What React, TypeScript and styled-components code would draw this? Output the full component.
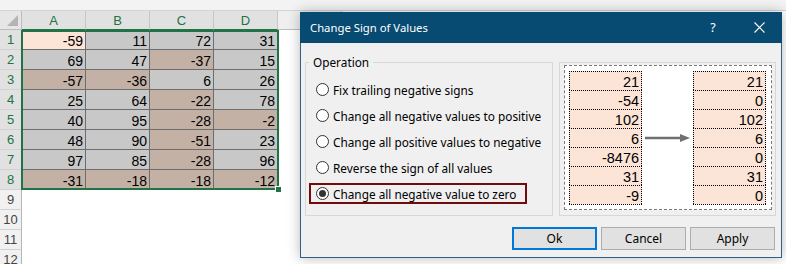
import React from "react";
import styled, { createGlobalStyle } from "styled-components";

const GlobalStyle = createGlobalStyle`
  html, body { margin: 0; padding: 0; background: #fff; overflow: hidden; }
  *, *::before, *::after { box-sizing: border-box; }
`;

const Page = styled.div`
  position: relative;
  width: 786px;
  height: 264px;
  overflow: hidden;
  background: #fff;
  display: flex;
  flex-direction: column;
`;

const Ribbon = styled.div`
  flex: none;
  height: 11px;
  background: #f3f3f3;
  border-bottom: 1px solid #d4d4d4;
`;

const SheetWrap = styled.div`
  position: relative;
  flex: none;
`;

const Grid = styled.div`
  display: grid;
  grid-template-columns: 22px repeat(5, 64px);
  grid-template-rows: 19px repeat(12, 20px);
  font-family: "Liberation Sans", Arial, sans-serif;
`;

const Corner = styled.div`
  position: relative;
  background: #e6e6e6;
  border-right: 1px solid #bdbdbd;
  border-bottom: 1px solid #bdbdbd;
  display: flex;
  align-items: flex-end;
  justify-content: flex-end;
  padding: 0 3px 3px 0;
`;

const ColHead = styled.div<{ $sel?: boolean }>`
  background: ${(p) => (p.$sel ? "#e1e1e1" : "#efefef")};
  color: ${(p) => (p.$sel ? "#217346" : "#444")};
  border-right: 1px solid #c6c6c6;
  border-bottom: 1px solid ${(p) => (p.$sel ? "#217346" : "#bdbdbd")};
  display: flex;
  align-items: center;
  justify-content: center;
  font-size: 13px;
`;

const RowHead = styled.div<{ $sel?: boolean }>`
  background: ${(p) => (p.$sel ? "#e1e1e1" : "#f1f1f1")};
  color: ${(p) => (p.$sel ? "#217346" : "#444")};
  border-right: 1px solid #b5b5b5;
  border-bottom: 1px solid #d2d2d2;
  display: flex;
  align-items: center;
  justify-content: center;
  font-size: 13px;
`;

const Cell = styled.div<{ $tone: "gray" | "neg" | "active" | "blank" }>`
  background: ${(p) =>
    p.$tone === "gray"
      ? "#c8c8c8"
      : p.$tone === "neg"
      ? "#c4b1a6"
      : p.$tone === "active"
      ? "#fce4d6"
      : "#ffffff"};
  border-right: 1px solid ${(p) => (p.$tone === "blank" ? "transparent" : "#6d6d6d")};
  border-bottom: 1px solid ${(p) => (p.$tone === "blank" ? "transparent" : "#6d6d6d")};
  display: flex;
  align-items: flex-end;
  justify-content: flex-end;
  padding: 0 2px 0 0;
  font-size: 14px;
  line-height: 16px;
  color: #000;
`;

const Selection = styled.div`
  position: absolute;
  left: 21px;
  top: 19px;
  width: 258px;
  height: 160px;
  border: 2px solid #217346;
  pointer-events: none;
`;

const FillHandle = styled.div`
  position: absolute;
  left: 275px;
  top: 175px;
  width: 7px;
  height: 7px;
  background: #217346;
  border: 1px solid #fff;
`;

/* ---------- Dialog ---------- */

const Dialog = styled.div`
  position: absolute;
  left: 300px;
  top: 12px;
  width: 482px;
  height: 246px;
  background: #f0f0f0;
  border: 1px solid #2f5f86;
  box-shadow: 0 0 12px rgba(0, 0, 0, 0.28);
  display: flex;
  flex-direction: column;
  font-family: "Noto Sans", "Segoe UI", sans-serif;
  font-size: 11.8px;
  color: #000;
`;

const TitleBar = styled.div`
  flex: none;
  height: 31px;
  margin: -1px -1px 0 -1px;
  background: #074b73;
  color: #fff;
  display: flex;
  align-items: center;
  padding-left: 10px;
`;

const Title = styled.div`
  flex: 1;
  font-size: 11.3px;
`;

const CaptionButton = styled.div`
  width: 46px;
  height: 31px;
  display: flex;
  align-items: center;
  justify-content: center;
  font-size: 12.5px;
`;

const Body = styled.div`
  flex: 1;
  display: flex;
  flex-direction: column;
  padding: 11px 5px 0 4px;
`;

const Groups = styled.div`
  display: flex;
  gap: 6px;
  align-items: flex-start;
`;

const Group = styled.fieldset`
  margin: 0;
  width: 246px;
  height: 162px;
  padding: 9px 0 0 3px;
  border: 1px solid #d7d7d7;
  display: flex;
  flex-direction: column;
  gap: 5px;
`;

const Legend = styled.legend`
  padding: 0 4px;
  margin-left: 0;
  line-height: 16px;
`;

const Option = styled.div<{ $active?: boolean }>`
  display: flex;
  align-items: center;
  gap: 4px;
  width: fit-content;
  height: 21px;
  padding: 0 9px 0 5px;
  border: 2px solid ${(p) => (p.$active ? "#720c0c" : "transparent")};
  white-space: nowrap;
`;

const Radio = styled.span<{ $checked?: boolean }>`
  flex: none;
  width: 13px;
  height: 13px;
  border-radius: 50%;
  border: 1px solid #333;
  background: #fff;
  display: flex;
  align-items: center;
  justify-content: center;
  &::after {
    content: "";
    width: 7px;
    height: 7px;
    border-radius: 50%;
    background: ${(p) => (p.$checked ? "#333" : "transparent")};
  }
`;

const PreviewBox = styled.div`
  margin-top: 8px;
  width: 219px;
  height: 154px;
  border: 1px solid #d7d7d7;
  padding: 2px 3px 5px 4px;
  display: flex;
`;

const PreviewFrame = styled.div`
  flex: 1;
  background: #fff;
  border: 1px dashed #7a7a7a;
  padding: 0 5px 0 4px;
  display: flex;
  align-items: center;
  justify-content: space-between;
`;

const PreviewCol = styled.div`
  width: 73px;
  display: flex;
  flex-direction: column;
  border-bottom: 1px dotted #000;
`;

const PreviewCell = styled.div`
  height: 19px;
  background: #fce4d6;
  border: 1px dotted #000;
  border-bottom: none;
  display: flex;
  align-items: flex-end;
  justify-content: flex-end;
  padding-right: 2px;
  font-family: "Liberation Sans", Arial, sans-serif;
  font-size: 14.5px;
  line-height: 16px;
`;

const Buttons = styled.div`
  display: flex;
  justify-content: flex-end;
  gap: 4px;
  margin-top: 11px;
  padding-right: 1px;
`;

const Button = styled.button<{ $primary?: boolean }>`
  width: 85px;
  height: 23px;
  padding: 0;
  background: #e1e1e1;
  border: ${(p) => (p.$primary ? "2px solid #0078d7" : "1px solid #adadad")};
  font: inherit;
  font-size: 12px;
  color: #000;
`;

const data: number[][] = [
  [-59, 11, 72, 31],
  [69, 47, -37, 15],
  [-57, -36, 6, 26],
  [25, 64, -22, 78],
  [40, 95, -28, -2],
  [48, 90, -51, 23],
  [97, 85, -28, 96],
  [-31, -18, -18, -12],
];

const options = [
  "Fix trailing negative signs",
  "Change all negative values to positive",
  "Change all positive values to negative",
  "Reverse the sign of all values",
  "Change all negative value to zero",
];

const before = ["21", "-54", "102", "6", "-8476", "31", "-9"];
const after = ["21", "0", "102", "6", "0", "31", "0"];

const columns = ["A", "B", "C", "D", ""];

export default function App() {
  const rows = Array.from({ length: 12 }, (_, i) => i);
  return (
    <Page>
      <GlobalStyle />
      <Ribbon />
      <SheetWrap>
        <Grid>
          <Corner>
            <svg width="11" height="11" viewBox="0 0 11 11">
              <polygon points="11,0 11,11 0,11" fill="#b4b4b4" />
            </svg>
          </Corner>
          {columns.map((c, i) => (
            <ColHead key={i} $sel={i < 4}>
              {c}
            </ColHead>
          ))}
          {rows.map((r) => (
            <React.Fragment key={r}>
              <RowHead $sel={r < 8}>{r + 1}</RowHead>
              {[0, 1, 2, 3, 4].map((c) => {
                const inSel = r < 8 && c < 4;
                const v = inSel ? data[r][c] : null;
                const tone = !inSel
                  ? "blank"
                  : r === 0 && c === 0
                  ? "active"
                  : (v as number) < 0
                  ? "neg"
                  : "gray";
                return (
                  <Cell key={c} $tone={tone}>
                    {v !== null ? v : ""}
                  </Cell>
                );
              })}
            </React.Fragment>
          ))}
        </Grid>
        <Selection />
        <FillHandle />
      </SheetWrap>

      <Dialog>
        <TitleBar>
          <Title>Change Sign of Values</Title>
          <CaptionButton>?</CaptionButton>
          <CaptionButton>
            <svg width="11" height="11" viewBox="0 0 11 11">
              <path d="M0.5 0.5 L10.5 10.5 M10.5 0.5 L0.5 10.5" stroke="#fff" strokeWidth="1.1" />
            </svg>
          </CaptionButton>
        </TitleBar>
        <Body>
          <Groups>
            <Group>
              <Legend>Operation</Legend>
              {options.map((o, i) => (
                <Option key={o} $active={i === 4}>
                  <Radio $checked={i === 4} />
                  {o}
                </Option>
              ))}
            </Group>
            <PreviewBox>
              <PreviewFrame>
                <PreviewCol>
                  {before.map((v, i) => (
                    <PreviewCell key={i}>{v}</PreviewCell>
                  ))}
                </PreviewCol>
                <svg width="45" height="10" viewBox="0 0 45 10">
                  <line x1="0" y1="5" x2="37" y2="5" stroke="#707070" strokeWidth="2.4" />
                  <polygon points="35,1 45,5 35,9" fill="#707070" />
                </svg>
                <PreviewCol>
                  {after.map((v, i) => (
                    <PreviewCell key={i}>{v}</PreviewCell>
                  ))}
                </PreviewCol>
              </PreviewFrame>
            </PreviewBox>
          </Groups>
          <Buttons>
            <Button $primary>Ok</Button>
            <Button>Cancel</Button>
            <Button>Apply</Button>
          </Buttons>
        </Body>
      </Dialog>
    </Page>
  );
}
